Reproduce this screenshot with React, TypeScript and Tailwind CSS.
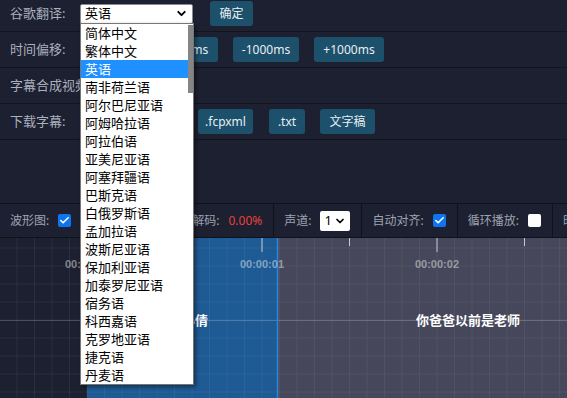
import type { ReactNode } from "react";
import { ChevronDown, Check } from "lucide-react";

const languages = [
  "简体中文",
  "繁体中文",
  "英语",
  "南非荷兰语",
  "阿尔巴尼亚语",
  "阿姆哈拉语",
  "阿拉伯语",
  "亚美尼亚语",
  "阿塞拜疆语",
  "巴斯克语",
  "白俄罗斯语",
  "孟加拉语",
  "波斯尼亚语",
  "保加利亚语",
  "加泰罗尼亚语",
  "宿务语",
  "科西嘉语",
  "克罗地亚语",
  "捷克语",
  "丹麦语",
];

function Btn({ children, className = "" }: { children: ReactNode; className?: string }) {
  return (
    <span
      className={`inline-flex h-[25px] items-center justify-center whitespace-nowrap rounded-[3px] bg-[#1c506b] text-[12px] text-[#e8eef3] ${className}`}
    >
      {children}
    </span>
  );
}

function Row({ label, children }: { label: string; children?: ReactNode }) {
  return (
    <div className="flex h-[36px] items-center border-b border-[#13151e] pl-[10px]">
      <span className="w-[70px] shrink-0 whitespace-nowrap text-[13px] text-[#aab0bd]">{label}</span>
      {children}
    </div>
  );
}

function Box({ on }: { on?: boolean }) {
  if (on) {
    return (
      <span className="flex h-[13px] w-[13px] shrink-0 items-center justify-center rounded-[2px] bg-[#0f74f0]">
        <Check size={11} strokeWidth={3.5} color="white" />
      </span>
    );
  }
  return <span className="h-[13px] w-[13px] shrink-0 rounded-[2px] bg-white" />;
}

function Item({ children, last }: { children: ReactNode; last?: boolean }) {
  return (
    <div
      className={`flex h-full shrink-0 items-center gap-[9px] pl-[10px] pr-[11px] text-[12px] text-[#9ea3b1] ${
        last ? "" : "border-r border-[#10121a]"
      }`}
    >
      {children}
    </div>
  );
}

function Waveform() {
  const w = 567;
  const h = 160;
  const vlines: number[] = [];
  for (let x = 87 - 17.5 * 5; x < w; x += 17.5) vlines.push(x);
  const hlines: number[] = [];
  for (let y = 10; y < h; y += 18) hlines.push(y);
  const ticks: { x: number; long: boolean }[] = [];
  for (let k = 0; k < 8; k++) ticks.push({ x: 87 + 87.5 * k, long: k % 2 === 0 });

  return (
    <svg width={w} height={h} className="block">
      <rect x={0} y={0} width={w} height={h} fill="#1d2031" />
      <rect x={87} y={0} width={191} height={h} fill="#1e5a93" />
      <rect x={278} y={0} width={w - 278} height={h} fill="#46475a" />
      {vlines.map((x) => (
        <line key={`v${x}`} x1={x} y1={0} x2={x} y2={h} stroke="white" strokeOpacity={0.06} />
      ))}
      {hlines.map((y) => (
        <line key={`h${y}`} x1={0} y1={y} x2={w} y2={y} stroke="white" strokeOpacity={0.06} />
      ))}
      <line x1={0} y1={82.5} x2={w} y2={82.5} stroke="white" strokeOpacity={0.18} />
      <line x1={277.5} y1={0} x2={277.5} y2={h} stroke="#2f86dc" strokeWidth={1.5} />
      {ticks.map((t) => (
        <line
          key={`t${t.x}`}
          x1={t.x}
          y1={0}
          x2={t.x}
          y2={t.long ? 14 : 8}
          stroke="#c9c9d2"
          strokeWidth={1}
        />
      ))}
      {["00:00:00", "00:00:01", "00:00:02", "00:00:03"].map((s, i) => (
        <text
          key={s}
          x={87 + 175 * i}
          y={30}
          textAnchor="middle"
          fontFamily="'Liberation Sans', Arial, sans-serif"
          fontWeight="bold"
          fontSize={11}
          fill="white"
          fillOpacity={0.45}
        >
          {s}
        </text>
      ))}
      <text
        x={182}
        y={87}
        textAnchor="middle"
        fontFamily="'Noto Sans CJK SC', sans-serif"
        fontWeight="bold"
        fontSize={13}
        fill="white"
      >
        我是小倩
      </text>
      <text
        x={468}
        y={87}
        textAnchor="middle"
        fontFamily="'Noto Sans CJK SC', sans-serif"
        fontWeight="bold"
        fontSize={13}
        fill="white"
      >
        你爸爸以前是老师
      </text>
    </svg>
  );
}

function LangList() {
  return (
    <div className="absolute left-[80px] top-[23px] flex h-[362px] w-[114px] border border-[#767676] bg-white shadow-[2px_2px_4px_rgba(0,0,0,0.45)]">
      <div className="w-[107px]">
        {languages.map((l) => (
          <div
            key={l}
            className={`h-[18px] whitespace-nowrap pl-[4px] text-[13px] leading-[18px] ${
              l === "英语" ? "bg-[#1e90ff] text-white" : "text-black"
            }`}
          >
            {l}
          </div>
        ))}
      </div>
      <div className="w-[5px] pt-[1px]">
        <div className="h-[68px] w-full bg-[#858585]" />
      </div>
    </div>
  );
}

export default function App() {
  return (
    <div className="relative h-[398px] w-[567px] overflow-hidden bg-[#1d2030] font-['Noto_Sans','Noto_Sans_CJK_SC',sans-serif]">
      <div className="-mt-[4px]">
        <Row label="谷歌翻译:">
          <div className="flex h-[20px] w-[113px] items-center justify-between rounded-[2px] border border-[#8a8a8a] bg-white pl-[4px] pr-[4px] text-[13px] text-black">
            <span>英语</span>
            <ChevronDown size={13} strokeWidth={3.5} color="black" />
          </div>
          <Btn className="ml-[17px] h-[24px] w-[43px]">确定</Btn>
        </Row>
        <Row label="时间偏移:">
          <div className="flex gap-[15px]">
            <Btn className="w-[59px]">-100ms</Btn>
            <Btn className="w-[64px]">+100ms</Btn>
            <Btn className="w-[66px]">-1000ms</Btn>
            <Btn className="w-[70px]">+1000ms</Btn>
          </div>
        </Row>
        <Row label="字幕合成视频" />
        <Row label="下载字幕:">
          <div className="flex gap-[15px]">
            <Btn className="w-[44px]">.srt</Btn>
            <Btn className="w-[44px]">.ass</Btn>
            <Btn className="w-[55px]">.fcpxml</Btn>
            <Btn className="ml-[1px] w-[36px]">.txt</Btn>
            <Btn className="w-[55px]">文字稿</Btn>
          </div>
        </Row>
      </div>

      <div className="mt-[63px] flex h-[35px] overflow-hidden border-y border-[#10121a]">
        <Item>
          <span>波形图:</span>
          <Box on />
        </Item>
        <Item>
          <span className="w-[55px] whitespace-nowrap">显示字幕:</span>
          <Box on />
        </Item>
        <Item>
          <span>解码:</span>
          <span className="text-[#e8403a]">0.00%</span>
        </Item>
        <Item>
          <span>声道:</span>
          <span className="flex h-[20px] w-[30px] items-center justify-between rounded-[2px] bg-white pl-[4px] pr-[4px] text-[13px] text-black">
            1
            <ChevronDown size={12} strokeWidth={3.5} color="black" />
          </span>
        </Item>
        <Item>
          <span>自动对齐:</span>
          <Box on />
        </Item>
        <Item>
          <span>循环播放:</span>
          <Box />
        </Item>
        <Item last>
          <span className="whitespace-nowrap text-[#8ea4b0]">时间轴:</span>
        </Item>
      </div>

      <Waveform />
      <LangList />
    </div>
  );
}
